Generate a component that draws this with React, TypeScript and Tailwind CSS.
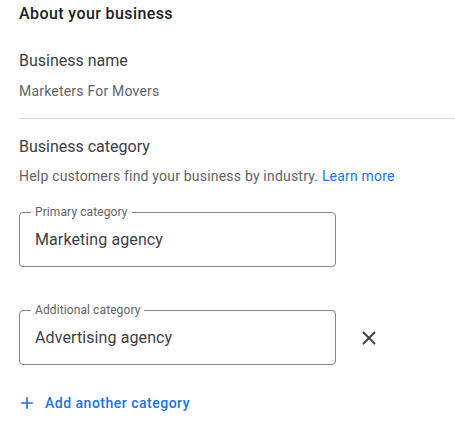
import { X, Plus } from "lucide-react";

function OutlinedField({ label, value }: { label: string; value: string }) {
  return (
    <div className="relative flex h-[55px] w-[317px] items-center rounded-[4px] border border-[#80868b] pl-[15px]">
      <span className="absolute -top-[9px] left-[11px] bg-white px-[4px] text-[12px] leading-[16px] tracking-[0.1px] text-[#5f6368]">
        {label}
      </span>
      <span className="text-[16px] tracking-[0.1px] text-[#3c4043]">{value}</span>
    </div>
  );
}

export default function App() {
  return (
    <div className="h-[424px] w-[455px] bg-white pl-[19px] font-['Roboto',sans-serif]">
      {/* About section */}
      <h2 className="pt-[2px] text-[16px] font-medium leading-[24px] tracking-[0.4px] text-[#202124]">About your business</h2>
      <p className="mt-[23px] text-[16px] leading-[24px] text-[#3c4043]">Business name</p>
      <p className="mt-[8px] text-[14px] leading-[20px] tracking-[0.2px] text-[#5f6368]">Marketers For Movers</p>

      <div className="mt-[17px] border-t border-[#dadce0]" />

      {/* Category section */}
      <p className="mt-[16px] text-[16px] leading-[24px] text-[#3c4043]">Business category</p>
      <p className="mt-[7px] text-[14px] leading-[20px] tracking-[0.2px] text-[#5f6368]">
        Help customers find your business by industry.{" "}
        <a className="text-[#1a73e8]">Learn more</a>
      </p>

      <div className="mt-[26px]">
        <OutlinedField label="Primary category" value="Marketing agency" />
      </div>

      <div className="mt-[43px] flex items-center">
        <OutlinedField label="Additional category" value="Advertising agency" />
        <button className="ml-[21px] flex h-[24px] w-[24px] items-center justify-center text-[#3c4043]">
          <X size={22} strokeWidth={2} />
        </button>
      </div>

      <div className="mt-[28px] flex items-center text-[#1a73e8]">
        <Plus size={18} strokeWidth={2.2} className="ml-[-1px]" />
        <span className="ml-[9px] text-[14px] font-medium leading-[20px] tracking-[0.5px]">Add another category</span>
      </div>
    </div>
  );
}
